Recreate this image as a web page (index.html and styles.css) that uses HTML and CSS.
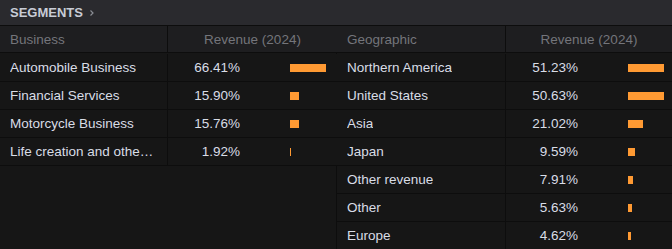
FILE: index.html
```html
<!DOCTYPE html>
<html>
<head>
<meta charset="utf-8">
<link rel="stylesheet" href="styles.css">
</head>
<body>
<div class="panel">
  <div class="topbar">
    <span class="title">SEGMENTS</span>
    <svg class="chev" width="6" height="8" viewBox="0 0 6 8"><path d="M1.5 1.5 L4 4 L1.5 6.5" fill="none" stroke="#8a8d94" stroke-width="1.2"/></svg>
  </div>
  <div class="tables">
    <div class="seg left">
      <div class="hcell name">Business</div>
      <div class="hcell rev">Revenue (2024)</div>

      <div class="cell name"><span class="txt">Automobile Business</span></div>
      <div class="cell val"><span class="pct">66.41%</span><span class="bar" style="width:36px"></span></div>

      <div class="cell name"><span class="txt">Financial Services</span></div>
      <div class="cell val"><span class="pct">15.90%</span><span class="bar" style="width:9px"></span></div>

      <div class="cell name"><span class="txt">Motorcycle Business</span></div>
      <div class="cell val"><span class="pct">15.76%</span><span class="bar" style="width:9px"></span></div>

      <div class="cell name"><span class="txt">Life creation and other businesses</span></div>
      <div class="cell val"><span class="pct">1.92%</span><span class="bar" style="width:1px"></span></div>
    </div>
    <div class="seg right">
      <div class="hcell name">Geographic</div>
      <div class="hcell rev">Revenue (2024)</div>

      <div class="cell name"><span class="txt">Northern America</span></div>
      <div class="cell val"><span class="pct">51.23%</span><span class="bar" style="width:36px"></span></div>

      <div class="cell name"><span class="txt">United States</span></div>
      <div class="cell val"><span class="pct">50.63%</span><span class="bar" style="width:36px"></span></div>

      <div class="cell name"><span class="txt">Asia</span></div>
      <div class="cell val"><span class="pct">21.02%</span><span class="bar" style="width:15px"></span></div>

      <div class="cell name"><span class="txt">Japan</span></div>
      <div class="cell val"><span class="pct">9.59%</span><span class="bar" style="width:7px"></span></div>

      <div class="cell name"><span class="txt">Other revenue</span></div>
      <div class="cell val"><span class="pct">7.91%</span><span class="bar" style="width:5px"></span></div>

      <div class="cell name"><span class="txt">Other</span></div>
      <div class="cell val"><span class="pct">5.63%</span><span class="bar" style="width:4px"></span></div>

      <div class="cell name"><span class="txt">Europe</span></div>
      <div class="cell val"><span class="pct">4.62%</span><span class="bar" style="width:3px"></span></div>
    </div>
  </div>
</div>
</body>
</html>
```
FILE: styles.css
```css
* { box-sizing: border-box; }
html, body { margin: 0; padding: 0; background: #161616; }
body {
  font-family: "Liberation Sans", Arial, sans-serif;
  width: 672px;
  height: 249px;
  overflow: hidden;
}
.panel { width: 672px; height: 249px; background: #161616; }
.topbar {
  height: 26px;
  background: #2a2a2e;
  border-bottom: 1px solid #0d0d0d;
  display: flex;
  align-items: center;
  padding-left: 10px;
  gap: 6px;
}
.title {
  color: #c8ccd6;
  font-weight: bold;
  font-size: 13px;
}
.chev { margin-top: 1px; }
.tables { display: flex; }
.seg {
  display: grid;
  grid-auto-rows: 28px;
  align-content: start;
}
.seg.left { width: 337px; grid-template-columns: 168px 169px; border-right: 1px solid #0d0d0d; }
.seg.right { width: 335px; grid-template-columns: 169px 166px; }
.hcell {
  height: 27px;
  background: #1e1e20;
  color: #74757b;
  font-size: 13.5px;
  display: flex;
  align-items: center;
  border-bottom: 1px solid #0d0d0d;
}
.hcell.name { padding-left: 10px; border-right: 1px solid #0d0d0d; }
.hcell.rev { justify-content: center; }
.cell {
  background: #161616;
  border-bottom: 1px solid #0d0d0d;
  color: #d9dde6;
  font-size: 13.5px;
  display: flex;
  align-items: center;
}
.cell.name { padding-left: 10px; padding-right: 10px; border-right: 1px solid #0d0d0d; min-width: 0; }
.txt { white-space: nowrap; overflow: hidden; text-overflow: ellipsis; min-width: 0; }
.cell.val { gap: 50px; }
.pct { width: 72px; text-align: right; }
.bar { height: 8px; background: #ff9a33; }
```
